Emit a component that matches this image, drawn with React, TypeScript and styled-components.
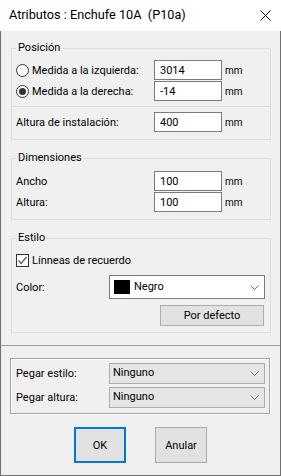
import React from 'react';
import styled, { createGlobalStyle } from 'styled-components';

const GlobalStyle = createGlobalStyle`
  html, body {
    margin: 0;
    padding: 0;
    background: #ffffff;
  }
  body {
    font-family: Roboto, 'Noto Sans', sans-serif;
    font-size: 11px;
    color: #000;
  }
`;

const Window = styled.div`
  width: 281px;
  height: 476px;
  display: flex;
  flex-direction: column;
  box-sizing: border-box;
`;

const TitleBar = styled.div`
  height: 31px;
  flex: 0 0 31px;
  background: #ffffff;
  display: flex;
  align-items: center;
  justify-content: space-between;
  padding: 0 10px 1px 9px;
  box-sizing: border-box;
`;

const Title = styled.span`
  white-space: pre;
  font-size: 12.7px;
  line-height: 16px;
`;

const Body = styled.div`
  flex: 1;
  background: #f0f0f0;
  border: 1px solid #707070;
  border-top: none;
  display: flex;
  flex-direction: column;
  align-items: flex-start;
`;

const Group = styled.fieldset<{ $top: number; $pt: number; $pb: number }>`
  box-sizing: border-box;
  width: 260px;
  min-width: 0;
  margin: ${p => p.$top}px 0 0 10px;
  padding: ${p => p.$pt}px 0 ${p => p.$pb}px 4px;
  border: 1px solid #dcdcdc;
  display: flex;
  flex-direction: column;
`;

const Legend = styled.legend`
  padding: 0 2px;
  line-height: 16px;
  height: 16px;
`;

const Rows = styled.div<{ $gap: number }>`
  display: flex;
  flex-direction: column;
  gap: ${p => p.$gap}px;
`;

const Row = styled.div<{ $label: number; $h: number }>`
  display: grid;
  grid-template-columns: ${p => p.$label}px auto auto;
  align-items: center;
  justify-content: start;
  height: ${p => p.$h}px;
`;

const Label = styled.span`
  display: flex;
  align-items: center;
  white-space: nowrap;
`;

const TextBox = styled.input`
  box-sizing: border-box;
  width: 68px;
  height: 20px;
  border: 1px solid #7a7a7a;
  background: #ffffff;
  padding: 0 5px;
  margin: 0;
  font: inherit;
  color: #000;
  outline: none;
`;

const Unit = styled.span`
  margin-left: 3px;
  font-size: 10px;
`;

const Divider = styled.div`
  height: 1px;
  background: #dcdcdc;
  margin: 5px 0 5px -5px;
  width: 260px;
`;

const RadioMark = styled.span<{ $checked?: boolean }>`
  box-sizing: border-box;
  width: 13px;
  height: 13px;
  border: 1px solid #333333;
  border-radius: 50%;
  background: #ffffff;
  margin-right: 3px;
  display: flex;
  align-items: center;
  justify-content: center;

  &::after {
    content: '';
    width: 7px;
    height: 7px;
    border-radius: 50%;
    background: ${p => (p.$checked ? '#333333' : 'transparent')};
  }
`;

const CheckMark = styled.span`
  box-sizing: border-box;
  width: 13px;
  height: 13px;
  border: 1px solid #333333;
  background: #ffffff;
  margin-right: 3px;
  display: flex;
  align-items: center;
  justify-content: center;
`;

const Select = styled.div<{ $white?: boolean; $h: number }>`
  box-sizing: border-box;
  width: 156px;
  height: ${p => p.$h}px;
  border: 1px solid ${p => (p.$white ? '#7a7a7a' : '#adadad')};
  background: ${p => (p.$white ? '#ffffff' : '#e5e5e5')};
  display: flex;
  align-items: center;
  padding: 0 5px 0 ${p => (p.$white ? 4 : 3)}px;
  gap: 4px;
`;

const Swatch = styled.span`
  width: 16px;
  height: 14px;
  background: #000000;
`;

const SelectText = styled.span`
  flex: 1;
  padding-bottom: 2px;
`;

const ButtonRow = styled.div<{ $top: number }>`
  display: flex;
  justify-content: flex-end;
  margin-top: ${p => p.$top}px;
  padding-right: 6px;
`;

const Button = styled.button<{ $w: number; $h: number; $default?: boolean }>`
  box-sizing: border-box;
  width: ${p => p.$w}px;
  height: ${p => p.$h}px;
  margin: 0;
  padding: 0;
  font: inherit;
  color: #000;
  background: #e1e1e1;
  border: ${p => (p.$default ? '2px solid #0078d7' : '1px solid #adadad')};
`;

const Separator = styled.div`
  align-self: stretch;
  height: 1px;
  background: #a0a0a0;
  margin-top: 12px;
`;

const PasteBox = styled.div`
  box-sizing: border-box;
  width: 260px;
  margin: 12px 0 0 9px;
  padding: 4px 0 5px 5px;
  border: 1px solid #a0a0a0;
  box-shadow: inset 1px 1px 0 #ffffff, 1px 1px 0 #ffffff;
  display: flex;
  flex-direction: column;
  gap: 3px;
`;

const Footer = styled.div`
  align-self: stretch;
  display: flex;
  justify-content: center;
  gap: 29px;
  margin-top: 13px;
`;

const Chevron = () => (
  <svg width="9" height="5" viewBox="0 0 9 5">
    <polyline points="0.5,0.5 4.5,4.5 8.5,0.5" fill="none" stroke="#666" strokeWidth="0.9" />
  </svg>
);

const CloseIcon = () => (
  <svg width="11" height="11" viewBox="0 0 11 11">
    <path d="M0.5 0.5 L10.5 10.5 M10.5 0.5 L0.5 10.5" stroke="#000" strokeWidth="1" />
  </svg>
);

const Check = () => (
  <svg width="11" height="11" viewBox="0 0 11 11">
    <polyline points="1.5,5.5 4,8.5 9.5,2" fill="none" stroke="#555" strokeWidth="1.2" />
  </svg>
);

const App = () => {
  return (
    <>
      <GlobalStyle />
      <Window>
        <TitleBar>
          <Title>Atributos : Enchufe 10A  (P10a)</Title>
          <CloseIcon />
        </TitleBar>
        <Body>
          <Group $top={9} $pt={4} $pb={7}>
            <Legend>Posición</Legend>
            <Rows $gap={1}>
              <Row $label={138} $h={20}>
                <Label>
                  <RadioMark />
                  Medida a la izquierda:
                </Label>
                <TextBox defaultValue="3014" />
                <Unit>mm</Unit>
              </Row>
              <Row $label={138} $h={20}>
                <Label>
                  <RadioMark $checked />
                  Medida a la derecha:
                </Label>
                <TextBox defaultValue="-14" />
                <Unit>mm</Unit>
              </Row>
            </Rows>
            <Divider />
            <Row $label={138} $h={20}>
              <Label>Altura de instalación:</Label>
              <TextBox defaultValue="400" />
              <Unit>mm</Unit>
            </Row>
          </Group>

          <Group $top={10} $pt={5} $pb={7}>
            <Legend>Dimensiones</Legend>
            <Rows $gap={1}>
              <Row $label={138} $h={20}>
                <Label>Ancho</Label>
                <TextBox defaultValue="100" />
                <Unit>mm</Unit>
              </Row>
              <Row $label={138} $h={20}>
                <Label>Altura:</Label>
                <TextBox defaultValue="100" />
                <Unit>mm</Unit>
              </Row>
            </Rows>
          </Group>

          <Group $top={10} $pt={4} $pb={6}>
            <Legend>Estilo</Legend>
            <Rows $gap={5}>
              <Row $label={200} $h={20}>
                <Label>
                  <CheckMark>
                    <Check />
                  </CheckMark>
                  Línneas de recuerdo
                </Label>
              </Row>
              <Row $label={93} $h={24}>
                <Label>Color:</Label>
                <Select $white $h={24}>
                  <Swatch />
                  <SelectText>Negro</SelectText>
                  <Chevron />
                </Select>
              </Row>
            </Rows>
            <ButtonRow $top={6}>
              <Button $w={104} $h={21}>Por defecto</Button>
            </ButtonRow>
          </Group>

          <Separator />

          <PasteBox>
            <Row $label={93} $h={21}>
              <Label>Pegar estilo:</Label>
              <Select $h={21}>
                <SelectText>Ninguno</SelectText>
                <Chevron />
              </Select>
            </Row>
            <Row $label={93} $h={21}>
              <Label>Pegar altura:</Label>
              <Select $h={21}>
                <SelectText>Ninguno</SelectText>
                <Chevron />
              </Select>
            </Row>
          </PasteBox>

          <Footer>
            <Button $w={52} $h={36} $default>OK</Button>
            <Button $w={52} $h={36}>Anular</Button>
          </Footer>
        </Body>
      </Window>
    </>
  );
};

export default App;
